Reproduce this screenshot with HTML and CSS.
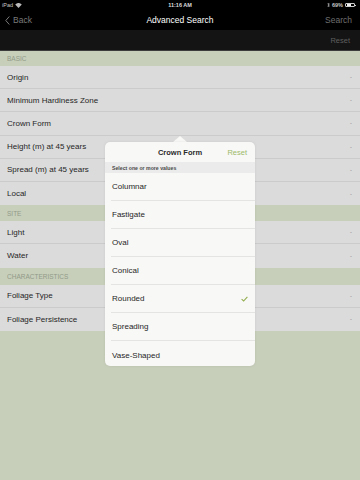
FILE: index.html
```html
<!DOCTYPE html>
<html>
<head>
<meta charset="utf-8">
<link rel="stylesheet" href="styles.css">
</head>
<body>
<div class="screen">
  <div class="status">
    <div class="st-left">iPad
      <svg class="wifi" width="7" height="5" viewBox="0 0 14 10"><path d="M7 10 L0.5 3 A9.5 9.5 0 0 1 13.5 3 Z" fill="#bbb"/></svg>
    </div>
    <div class="st-center">11:16 AM</div>
    <div class="st-right">
      <svg class="bt" width="3" height="6" viewBox="0 0 6 12"><path d="M1 3 L5 8 L3 10 L3 2 L5 4 L1 9" fill="none" stroke="#bbb" stroke-width="1"/></svg>
      <span>69%</span>
      <span class="battery"><span class="battery-fill"></span></span>
    </div>
  </div>
  <div class="navbar">
    <div class="nav-back">
      <svg width="5" height="9" viewBox="0 0 5 9"><path d="M4.3 0.5 L0.8 4.5 L4.3 8.5" fill="none" stroke="#7a7a7a" stroke-width="1"/></svg>
      <span>Back</span>
    </div>
    <div class="nav-title">Advanced Search</div>
    <div class="nav-right">Search</div>
  </div>
  <div class="toolbar"><span>Reset</span></div>

  <div class="section-header h-basic">BASIC</div>
  <div class="row"><span>Origin</span><span class="val">-</span></div>
  <div class="row"><span>Minimum Hardiness Zone</span><span class="val">-</span></div>
  <div class="row"><span>Crown Form</span><span class="val">-</span></div>
  <div class="row"><span>Height (m) at 45 years</span><span class="val">-</span></div>
  <div class="row"><span>Spread (m) at 45 years</span><span class="val">-</span></div>
  <div class="row last"><span>Local</span><span class="val">-</span></div>
  <div class="section-header h-site">SITE</div>
  <div class="row"><span>Light</span><span class="val">-</span></div>
  <div class="row last"><span>Water</span><span class="val">-</span></div>
  <div class="section-header h-char">CHARACTERISTICS</div>
  <div class="row"><span>Foliage Type</span><span class="val">-</span></div>
  <div class="row last"><span>Foliage Persistence</span><span class="val">-</span></div>

  <div class="popover">
    <div class="pop-arrow"></div>
    <div class="pop-body">
      <div class="pop-header">
        <span class="pop-title">Crown Form</span>
        <span class="pop-reset">Reset</span>
      </div>
      <div class="pop-sub">Select one or more values</div>
      <div class="opt">Columnar</div>
      <div class="opt">Fastigate</div>
      <div class="opt">Oval</div>
      <div class="opt">Conical</div>
      <div class="opt">Rounded
        <svg class="check" width="7" height="6" viewBox="0 0 7 6"><path d="M0.6 3.2 L2.6 5 L6.4 0.8" fill="none" stroke="#93ad4e" stroke-width="1.1"/></svg>
      </div>
      <div class="opt">Spreading</div>
      <div class="opt">Vase-Shaped</div>
    </div>
  </div>
</div>
</body>
</html>
```

FILE: styles.css
```css
html, body {
  margin: 0;
  padding: 0;
}
body {
  background: #c7cfbb;
  font-family: "Liberation Sans", Arial, sans-serif;
}
.screen {
  position: relative;
  width: 360px;
  height: 480px;
  overflow: hidden;
  background: #c7cfbb;
}
.status {
  height: 10px;
  background: #000;
  color: #c8c8c8;
  font-size: 5.5px;
  display: flex;
  align-items: center;
  justify-content: space-between;
  padding: 0 4px 0 2px;
  position: relative;
}
.st-left {
  display: flex;
  align-items: center;
  gap: 2px;
}
.st-center {
  position: absolute;
  left: 0;
  right: 0;
  text-align: center;
  font-weight: bold;
  color: #ddd;
}
.st-right {
  display: flex;
  align-items: center;
  gap: 2px;
  font-weight: bold;
}
.battery {
  width: 10px;
  height: 4.5px;
  border: 0.6px solid #ccc;
  border-radius: 1px;
  display: inline-block;
  padding: 0.5px;
  box-sizing: border-box;
  position: relative;
  margin-right: 1px;
}
.battery::after {
  content: "";
  position: absolute;
  right: -2px;
  top: 1px;
  width: 1px;
  height: 1.5px;
  background: #ccc;
}
.battery-fill {
  display: block;
  width: 69%;
  height: 100%;
  background: #eee;
}
.navbar {
  height: 20px;
  background: #000;
  display: flex;
  align-items: center;
  justify-content: space-between;
  position: relative;
  padding: 0 8px 0 5px;
  font-size: 8.5px;
}
.nav-back {
  display: flex;
  align-items: center;
  gap: 3px;
  color: #7a7a7a;
}
.nav-title {
  position: absolute;
  left: 0;
  right: 0;
  text-align: center;
  color: #fff;
}
.nav-right {
  color: #6f6f6f;
}
.toolbar {
  height: 20px;
  background: #141414;
  border-bottom: 1px solid #3c3c3c;
  display: flex;
  align-items: center;
  justify-content: flex-end;
  padding-right: 10px;
  color: #5f5f5f;
  font-size: 7.5px;
}
.section-header {
  background: #c7cfbb;
  color: #929a88;
  font-size: 6.5px;
  padding-left: 7px;
  display: flex;
  align-items: center;
}
.h-basic { height: 15px; }
.h-site { height: 16px; }
.h-char { height: 17px; }
.row {
  height: 23.2px;
  box-sizing: border-box;
  background: #dbdbdb;
  border-bottom: 1px solid #cbcbcb;
  display: flex;
  align-items: center;
  justify-content: space-between;
  padding: 0 8px 0 7px;
  color: #262626;
  font-size: 8px;
}
.row.last {
  border-bottom: none;
}
.row .val {
  color: #888;
  font-size: 6px;
}
.popover {
  position: absolute;
  left: 105px;
  top: 136px;
  width: 150px;
}
.pop-arrow {
  width: 0;
  height: 0;
  margin-left: 68px;
  border-left: 7px solid transparent;
  border-right: 7px solid transparent;
  border-bottom: 6px solid #f8f8f6;
}
.pop-body {
  background: #f8f8f6;
  border-radius: 5px;
  overflow: hidden;
  height: 224px;
  box-shadow: 0 0 3px rgba(0, 0, 0, 0.08);
}
.pop-header {
  height: 20px;
  display: flex;
  align-items: center;
  justify-content: center;
  position: relative;
}
.pop-title {
  font-size: 7.5px;
  font-weight: bold;
  color: #2a2a2a;
}
.pop-reset {
  position: absolute;
  right: 8px;
  font-size: 7.5px;
  color: #9dba6a;
}
.pop-sub {
  height: 11px;
  background: #ebebeb;
  font-size: 5.2px;
  font-weight: bold;
  color: #4a4a4a;
  display: flex;
  align-items: center;
  padding-left: 7px;
}
.opt {
  height: 28px;
  box-sizing: border-box;
  margin-left: 6px;
  border-bottom: 1px solid #e4e4e2;
  display: flex;
  align-items: center;
  justify-content: space-between;
  padding: 0 7px 0 1px;
  font-size: 8px;
  color: #262626;
}
.opt:last-child {
  border-bottom: none;
}
.check {
  margin-right: 0;
}
```
